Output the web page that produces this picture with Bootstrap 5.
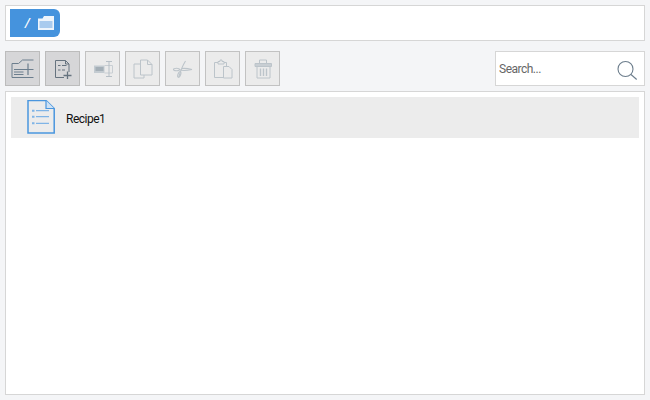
<!doctype html>
<html lang="en">
<head>
<meta charset="UTF-8" />
<title>Files</title>
<link href="https://cdn.jsdelivr.net/npm/bootstrap@5.3.0/dist/css/bootstrap.min.css" rel="stylesheet" />
<style>
html, body { height: 100%; }
body { background: #f4f5f7; font-family: Roboto, "Liberation Sans", sans-serif; overflow: hidden; }
.fm-page { height: 400px; padding: 5px; }
.fm-path { height: 36px; background: #fff; border: 1px solid #d6d6d6; padding: 3px 4px; margin-bottom: 10px; }
.fm-crumb { width: 50px; height: 28px; background: #4593dd; border-radius: 0 6px 6px 0; color: #fff; font-size: 13px; font-style: italic; font-weight: 500; padding-left: 15px; gap: 8px; }
.fm-tools { height: 35px; gap: 5px; margin-bottom: 5px; }
.fm-tool { width: 35px; height: 35px; padding: 0; border: 1px solid #bcbcbc; border-radius: 0; background: #d6d6d8; }
.fm-tool:disabled { background: #ebebeb; border-color: #c2c2c2; opacity: 1; }
.fm-search { width: 150px; height: 35px; background: #fff; border: 1px solid #d6d6d6; padding: 0 5px 0 3px; }
.fm-search input { border: 0; outline: 0; padding: 1px 0 0; width: 100px; font-size: 12px; letter-spacing: -.5px; color: #555; background: transparent; }
.fm-search input::placeholder { color: #666; opacity: 1; }
.fm-list { background: #fff; border: 1px solid #d6d6d6; padding: 5px; min-height: 0; }
.fm-row { height: 41px; background: #ececec; padding-left: 16px; gap: 11px; font-size: 12px; letter-spacing: -.5px; color: #111; }
.fm-name { padding-top: 2px; }
</style>
</head>
<body>
<div class="fm-page d-flex flex-column">
    <div class="fm-path d-flex">
        <div class="fm-crumb d-flex align-items-center">
            <span>/</span>
            <svg width="16" height="14" viewBox="0 0 16 14">
                <path d="M0 2.5H4.5L6 0H16V14H0Z" fill="#eef5fc"/>
                <rect x="1.5" y="5" width="13" height="7" fill="#a9cbee"/>
            </svg>
        </div>
    </div>

    <div class="fm-tools d-flex">
        <button class="fm-tool btn d-flex align-items-center justify-content-center">
            <svg width="24" height="20" viewBox="0 0 24 20" fill="none" stroke="#6c7e8e">
                <path d="M1 4.5V18.5H22.5M1 4.5H7.5L11.5 1H22.5"/>
                <path d="M3 10.5H12.5M3 13H12.5M3 15.5H12.5" stroke-width="1.2"/>
                <path d="M17 4.5V16M12 10.5H22.5" stroke-width="1.2"/>
            </svg>
        </button>
        <button class="fm-tool btn d-flex align-items-center justify-content-center">
            <svg width="24" height="20" viewBox="0 0 24 20" fill="none" stroke="#66737f">
                <path d="M13 18.5H4.5V1.5H14.5L18 5V13"/>
                <path d="M14.5 1.5V5H18"/>
                <path d="M7 6.5H9.5M11 6.5H15.5M7 11H9.5M11 11H14"/>
                <path d="M16.5 12.5V20M12.5 16.5H20.5" stroke-width="1.3"/>
            </svg>
        </button>
        <button class="fm-tool btn d-flex align-items-center justify-content-center" disabled>
            <svg width="24" height="20" viewBox="0 0 24 20" fill="none" stroke="#b6bfc6">
                <rect x="3" y="6.5" width="10.5" height="7.5" fill="#c3cbd1" stroke="none"/>
                <rect x="4.5" y="8" width="8" height="4" fill="#a4afb7" stroke="none"/>
                <path d="M13.5 6.5H21.5V14H13.5" stroke="#c8ced3"/>
                <path d="M15 2.5H21M15 17.5H21M18 2.5V17.5"/>
            </svg>
        </button>
        <button class="fm-tool btn d-flex align-items-center justify-content-center" disabled>
            <svg width="24" height="20" viewBox="0 0 24 20" fill="none" stroke="#bcc4ca">
                <path d="M9.5 5H3V19H13V16"/>
                <path d="M9.5 16V1H16.5L21 5.5V16Z"/>
                <path d="M16.5 1V5.5H21"/>
            </svg>
        </button>
        <button class="fm-tool btn d-flex align-items-center justify-content-center" disabled>
            <svg width="24" height="20" viewBox="0 0 24 20" fill="none" stroke="#bcc4ca" stroke-width="1.1">
                <path d="M14.5 2C12 6 9.5 12 7.8 18"/>
                <ellipse cx="8.3" cy="15.5" rx="1.3" ry="3" transform="rotate(20 8.3 15.5)"/>
                <ellipse cx="5.5" cy="10.5" rx="3" ry="1.2"/>
                <path d="M8.5 10.8C12 12 16 11.5 21 10.5"/>
                <path d="M11 9.5C14 9 17 9.5 21 10.5"/>
            </svg>
        </button>
        <button class="fm-tool btn d-flex align-items-center justify-content-center" disabled>
            <svg width="24" height="20" viewBox="0 0 24 20" fill="none" stroke="#bcc4ca">
                <path d="M12 18.5H3.5V3.5H7M13 3.5H15.5V7"/>
                <path d="M7 5V2.5H9V1H11V2.5H13V5Z"/>
                <path d="M12.5 7.5H18L21 10.5V19H12.5Z"/>
            </svg>
        </button>
        <button class="fm-tool btn d-flex align-items-center justify-content-center" disabled>
            <svg width="24" height="20" viewBox="0 0 24 20" fill="none" stroke="#bcc4ca">
                <path d="M8.5 4V1H15.5V4"/>
                <path d="M4 4.5H20.5V7.5H4Z" fill="#c8ced3"/>
                <path d="M6 7.5V19H19V7.5"/>
                <path d="M9.5 9.5V17M12.5 9.5V17M15.5 9.5V17" stroke-width="1.4"/>
            </svg>
        </button>
        <div class="fm-search d-flex align-items-center justify-content-between ms-auto">
            <input type="text" placeholder="Search..." />
            <svg width="22" height="22" viewBox="0 0 22 22" fill="none" stroke="#6c7d8c" stroke-width="1.1">
                <circle cx="8.5" cy="11" r="7.5"/>
                <path d="M14 16.5L19.7 21.5"/>
            </svg>
        </div>
    </div>

    <div class="fm-list flex-grow-1">
        <div class="fm-row d-flex align-items-center">
            <svg width="28" height="35" viewBox="0 0 28 35" fill="none" stroke="#4a96de">
                <path d="M1 .5H19L27.2 8.5V33H1Z" stroke-width="1.5"/>
                <path d="M19 .5V8.5H27.2" stroke-width="1.2" fill="#cfe2f5"/>
                <path d="M9 10.7H22M9 16.7H22M9 23.3H22" stroke="#7fb4e6" stroke-width="1.2"/>
                <path d="M5 10.7H7.5M5 16.7H7.5M5 23.3H7.5" stroke="#7fb4e6" stroke-width="2"/>
            </svg>
            <span class="fm-name">Recipe1</span>
        </div>
    </div>
</div>
<script src="https://cdn.jsdelivr.net/npm/bootstrap@5.3.0/dist/js/bootstrap.bundle.min.js"></script>
</body>
</html>
